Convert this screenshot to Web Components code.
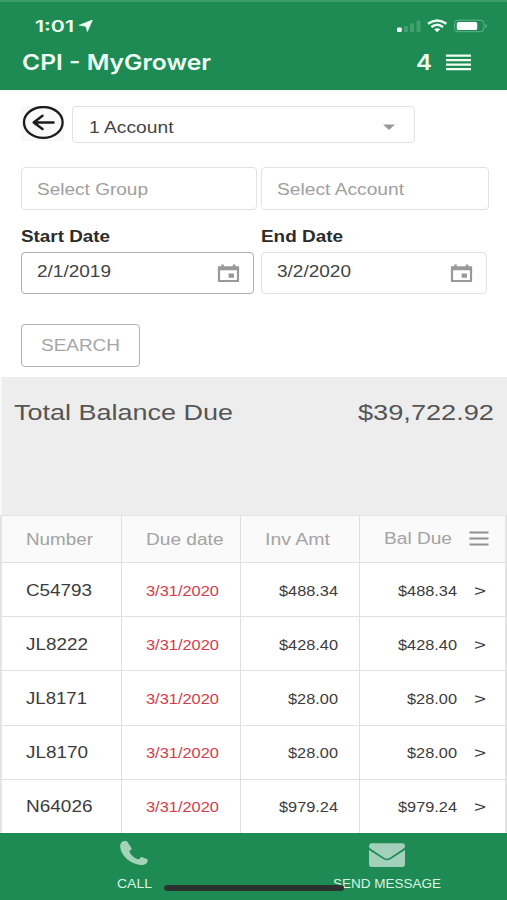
<!DOCTYPE html>
<html lang="en">
<head>
<meta charset="utf-8">
<title>CPI - MyGrower</title>
<style>
  html, body {
    margin: 0;
    height: 100%;
    overflow: hidden;
    background: #fff;
    font-family: "Liberation Sans", Arial, sans-serif;
  }
</style>
</head>
<body>
<grower-app></grower-app>

<script>
// Single line of text stretched to a fixed width
class WideText extends HTMLElement {
  constructor() {
    super();
    this.attachShadow({ mode: 'open' });
  }

  connectedCallback() {
    const width = parseFloat(this.getAttribute('width'));
    const size = parseFloat(this.getAttribute('size')) || 16;
    const lineHeight = this.hasAttribute('size') ? 20 : 22;
    this.shadowRoot.innerHTML = `
      <style>
        :host {
          display: block;
          flex: none;
          width: ${width}px;
          height: 20px;
          font-size: ${size}px;
          line-height: ${lineHeight}px;
          text-align: left;
          white-space: nowrap;
        }
        span { display: inline-block; transform-origin: 0 50%; }
      </style>
      <span><slot></slot></span>
    `;
    const span = this.shadowRoot.querySelector('span');
    const natural = span.getBoundingClientRect().width;
    if (natural) {
      span.style.transform = `scaleX(${width / natural})`;
    }
  }
}

class StatusBar extends HTMLElement {
  constructor() {
    super();
    this.attachShadow({ mode: 'open' }).innerHTML = `
      <style>
        :host {
          display: flex;
          justify-content: space-between;
          align-items: center;
          height: 22px;
          padding: 13px 19px 3px 35px;
          font-family: Inter, sans-serif;
          font-weight: 600;
        }
        .time { display: flex; align-items: center; gap: 5px; }
        svg { display: block; }
      </style>
      <div class="time">
        <wide-text width="39" size="16">1:01</wide-text>
        <svg width="14" height="12" viewBox="0 0 14 12"><path d="M13.5 0 8.4 11.6 6.8 6.3 0 5.2z" fill="#f0fff4" stroke="#f0fff4" stroke-width=".6"/></svg>
      </div>
      <svg width="92" height="14" viewBox="0 0 92 14">
        <rect x="1" y="8.5" width="4.8" height="4.6" rx="1.3" fill="#f4fff7"/>
        <g fill="#41a070">
          <rect x="8" y="7" width="4" height="6" rx="1"/>
          <rect x="14" y="4.3" width="4" height="8.7" rx="1"/>
          <rect x="20.5" y="1.5" width="4" height="11.5" rx="1"/>
        </g>
        <g fill="none" stroke="#f4fff7" stroke-width="2.4">
          <path d="M32 4.8Q41.2-2 50.4 4.8"/>
          <path d="M35.4 8Q41.2 3.4 47 8"/>
        </g>
        <path d="M38.2 10.3Q41.2 8.2 44.2 10.3L41.2 13.2z" fill="#f4fff7"/>
        <rect x="58.5" y="1.2" width="29.5" height="11.5" rx="3.5" fill="none" stroke="#65b489"/>
        <rect x="60.8" y="3" width="20.4" height="8" rx="1.5" fill="#fff"/>
        <path d="M89.5 4.8q3 2 0 4.4z" fill="#65b489"/>
      </svg>
    `;
  }
}

class AppHeader extends HTMLElement {
  constructor() {
    super();
    this.attachShadow({ mode: 'open' }).innerHTML = `
      <style>
        :host {
          display: block;
          box-sizing: border-box;
          height: 90px;
          background: #1d8b53;
          border-top: 2px solid #3b9b69;
          color: #f0fff4;
        }
        .bar {
          display: flex;
          align-items: center;
          height: 20px;
          padding: 12px 36px 0 22px;
          font-family: Inter, sans-serif;
          font-weight: 600;
        }
        .count { margin-left: auto; margin-right: 14px; }
      </style>
      <status-bar></status-bar>
      <div class="bar">
        <wide-text width="189" size="21.5"><slot></slot></wide-text>
        <wide-text class="count" width="16" size="21.5">4</wide-text>
        <svg width="25" height="17" viewBox="0 0 25 17"><path d="M0 1.7h25M0 6.2h25M0 10.7h25M0 15.2h25" stroke="#f0fff4" stroke-width="2.2"/></svg>
      </div>
    `;
  }
}

class FormField extends HTMLElement {
  constructor() {
    super();
    this.attachShadow({ mode: 'open' }).innerHTML = `
      <style>
        :host {
          display: flex;
          box-sizing: border-box;
          justify-content: space-between;
          align-items: center;
          border: 1.5px solid #e2e2e2;
          border-radius: 4px;
          padding: 0 13px 0 14.5px;
          color: #444;
        }
        :host([placeholder]) { color: #a0a0a0; }
        :host([active]) { border-color: #adadad; }
      </style>
      <slot></slot>
      <slot name="icon"></slot>
    `;
  }
}

class CalendarIcon extends HTMLElement {
  constructor() {
    super();
    this.attachShadow({ mode: 'open' }).innerHTML = `
      <style>
        :host { display: block; }
        svg { display: block; }
      </style>
      <svg width="23" height="19" viewBox="0 0 23 19">
        <path d="M2 4.5V17h19V4.5" fill="none" stroke="#999" stroke-width="2.2"/>
        <path d="M.9 2.2h21.2v4H.9zM4.2.5h2.6v3H4.2zM15.8.5h2.6v3h-2.6zM11.6 9.6h5.4v4.2h-5.4z" fill="#999"/>
      </svg>
    `;
  }
}

class SearchForm extends HTMLElement {
  constructor() {
    super();
    this.attachShadow({ mode: 'open' }).innerHTML = `
      <style>
        :host { display: block; box-sizing: border-box; height: 287px; padding: 16px 0 0 21px; }
        .row { display: flex; }
        .account { gap: 8px; height: 37px; }
        .back { background: #f8f8f8; width: 43px; height: 35px; }
        .account form-field { width: 343px; height: 37px; padding: 4px 19px 0 15.5px; }
        .selects { gap: 4px; margin-top: 24px; height: 43px; }
        .selects form-field { padding-left: 15px; }
        .group { width: 236px; }
        .acct { width: 228px; }
        .labels { margin-top: 16px; height: 26px; color: #2c2c2c; font-weight: bold; gap: 150.5px; }
        .dates { gap: 7px; height: 42px; }
        .start { width: 233px; }
        .end { width: 226px; }
        .dates wide-text { margin-bottom: 5px; }
        .dates calendar-icon { margin-top: 1px; }
        button {
          display: flex;
          box-sizing: border-box;
          justify-content: center;
          align-items: center;
          width: 119px;
          height: 43px;
          margin-top: 30px;
          padding: 0 0 1px;
          border: 1.5px solid #b0b0b0;
          border-radius: 4px;
          background: #fff;
          color: #a6a6a6;
          font-family: inherit;
        }
      </style>
      <div class="row account">
        <svg class="back" viewBox="0 0 43 35">
          <ellipse cx="22.3" cy="16.4" rx="19.3" ry="15.4" fill="#f9f9f9" stroke="#1c1c1c" stroke-width="2.3"/>
          <path d="M32.5 16.4H13M21.5 9.8 12.7 16.4l8.8 6.6" fill="none" stroke="#1c1c1c" stroke-width="2.5" stroke-linecap="round" stroke-linejoin="round"/>
        </svg>
        <form-field>
          <wide-text width="84.5">1 Account</wide-text>
          <svg slot="icon" width="12" height="6" viewBox="0 0 12 6"><path d="M0 .5h12L6 6z" fill="#999"/></svg>
        </form-field>
      </div>
      <div class="row selects">
        <form-field class="group" placeholder><wide-text width="111">Select Group</wide-text></form-field>
        <form-field class="acct" placeholder><wide-text width="127">Select Account</wide-text></form-field>
      </div>
      <div class="row labels">
        <wide-text width="89">Start Date</wide-text>
        <wide-text width="82">End Date</wide-text>
      </div>
      <div class="row dates">
        <form-field class="start" active>
          <wide-text width="74">2/1/2019</wide-text>
          <calendar-icon slot="icon"></calendar-icon>
        </form-field>
        <form-field class="end">
          <wide-text width="74">3/2/2020</wide-text>
          <calendar-icon slot="icon"></calendar-icon>
        </form-field>
      </div>
      <button><wide-text width="79">SEARCH</wide-text></button>
    `;
  }
}

class BalanceTotal extends HTMLElement {
  constructor() {
    super();
    this.attachShadow({ mode: 'open' }).innerHTML = `
      <style>
        :host {
          display: flex;
          box-sizing: border-box;
          justify-content: space-between;
          height: 138px;
          padding: 26px 13px 0 12px;
          border-left: 2px solid #f8f8f8;
          background: #ededed;
          color: #555;
        }
      </style>
      <wide-text width="219" size="22.5">Total Balance Due</wide-text>
      <wide-text width="136" size="22.5"><slot></slot></wide-text>
    `;
  }
}

const invoices = [
  { number: 'C54793', width: 66, amount: '$488.34' },
  { number: 'JL8222', width: 62, amount: '$428.40' },
  { number: 'JL8171', width: 61, amount: '$28.00' },
  { number: 'JL8170', width: 62, amount: '$28.00' },
  { number: 'N64026', width: 66.5, amount: '$979.24' }
];

class InvoiceTable extends HTMLElement {
  constructor() {
    super();
    this.attachShadow({ mode: 'open' });
  }

  connectedCallback() {
    const rows = invoices.map(({ number, width, amount }) => {
      const amountWidth = amount.length > 6 ? 59 : 50;
      return `
        <div class="row">
          <div class="number"><wide-text width="${width}">${number}</wide-text></div>
          <div class="due"><wide-text width="73" size="14">3/31/2020</wide-text></div>
          <div class="amount"><wide-text width="${amountWidth}" size="14">${amount}</wide-text></div>
          <div class="balance">
            <wide-text width="${amountWidth}" size="14">${amount}</wide-text>
            <wide-text class="more" width="12" size="14">&gt;</wide-text>
          </div>
        </div>`;
    }).join('');

    this.shadowRoot.innerHTML = `
      <style>
        :host {
          display: block;
          box-sizing: border-box;
          height: 318px;
          border: solid #e4e4e4;
          border-width: 1px 2px 0 2px;
          overflow: hidden;
          color: #3c3c3c;
        }
        .row {
          display: grid;
          grid-template-columns: 120px 119px 119px 1fr;
          box-sizing: border-box;
          height: 54.2px;
          border-bottom: 1.5px solid #e0e0e0;
        }
        .row > div {
          display: flex;
          box-sizing: border-box;
          align-items: center;
          border-right: 1.5px solid #e0e0e0;
          padding-left: 24px;
        }
        .row > div:last-child { border-right: 0; }
        .head { height: 47px; background: #fafafa; color: #a3a3a3; }
        .row > .due { color: #d53c4b; padding-top: 2px; }
        .row > .amount { justify-content: flex-end; padding: 2px 21.5px 0 0; }
        .row > .balance { justify-content: flex-end; padding: 2px 19px 0 0; }
        .more { margin-left: 17px; }
        .head > div:last-child { padding: 0 0 2px 24px; }
        .head svg { margin-left: 17px; }
      </style>
      <div class="row head">
        <div><wide-text width="67">Number</wide-text></div>
        <div><wide-text width="77.5">Due date</wide-text></div>
        <div><wide-text width="65">Inv Amt</wide-text></div>
        <div>
          <wide-text width="68">Bal Due</wide-text>
          <svg width="20" height="15" viewBox="0 0 20 15"><path d="M.5 1.5h19M.5 7.5h19M.5 13.5h19" stroke="#909090" stroke-width="2.2"/></svg>
        </div>
      </div>
      ${rows}
    `;
  }
}

class ActionBar extends HTMLElement {
  constructor() {
    super();
    this.attachShadow({ mode: 'open' }).innerHTML = `
      <style>
        :host {
          display: grid;
          position: relative;
          grid-template-columns: 268px 238px;
          height: 67px;
          background: #1d8b53;
          color: #dcf5e5;
        }
        .action { display: flex; flex-direction: column; align-items: center; }
        svg { display: block; flex: none; height: 34px; }
        .action wide-text { margin-top: 7px; }
        .home {
          position: absolute;
          left: 164px;
          top: 52px;
          width: 180px;
          height: 6px;
          border-radius: 3px;
          background: #2b332e;
        }
      </style>
      <div class="action">
        <svg width="30" viewBox="0 0 30 34"><path d="M5.2 8.1C2 9 .9 10.8 1.3 14.5 2 22.5 11.5 31 21.5 32c3.8.2 6.4-.8 7.3-4.5 0-.8-.2-1.2-.8-1.5l-4.8-1.8c-.6-.2-1.1-.1-1.5.3l-2 2C15 25.2 11.800 22 10.200 18.300l2-1.700c.4-.3.5-.8.3-1.300L8.500 8.900C8 8.200 7 7.700 5.200 8.100z" fill="#a3d4b9"/></svg>
        <wide-text width="35" size="12.5">CALL</wide-text>
      </div>
      <div class="action">
        <svg width="38" viewBox="0 0 38 34"><path d="M1 13.5C1 11.5 2 10.2 4 10.2h30q3 0 3 3.3c0 1-.8 1.800-2 2.500L21.500 25q-2.500 1.500-5 0L3 16C1.800 15.200 1 14.400 1 13.500zM1 16.900 15.500 26.200q3.500 1.900 7 0L37 16.900V31.500q0 2.500-3 2.500H4q-3 0-3-2.500z" fill="#a3d0bb"/></svg>
        <wide-text width="108" size="12.5">SEND MESSAGE</wide-text>
      </div>
      <div class="home"></div>
    `;
  }
}

class GrowerApp extends HTMLElement {
  constructor() {
    super();
    this.attachShadow({ mode: 'open' }).innerHTML = `
      <style>
        :host { display: block; width: 507px; height: 900px; overflow: hidden; background: #fff; }
      </style>
      <app-header>CPI - MyGrower</app-header>
      <search-form></search-form>
      <balance-total>$39,722.92</balance-total>
      <invoice-table></invoice-table>
      <action-bar></action-bar>
    `;
  }
}

customElements.define('wide-text', WideText);
customElements.define('status-bar', StatusBar);
customElements.define('app-header', AppHeader);
customElements.define('form-field', FormField);
customElements.define('calendar-icon', CalendarIcon);
customElements.define('search-form', SearchForm);
customElements.define('balance-total', BalanceTotal);
customElements.define('invoice-table', InvoiceTable);
customElements.define('action-bar', ActionBar);
customElements.define('grower-app', GrowerApp);
</script>
</body>
</html>
